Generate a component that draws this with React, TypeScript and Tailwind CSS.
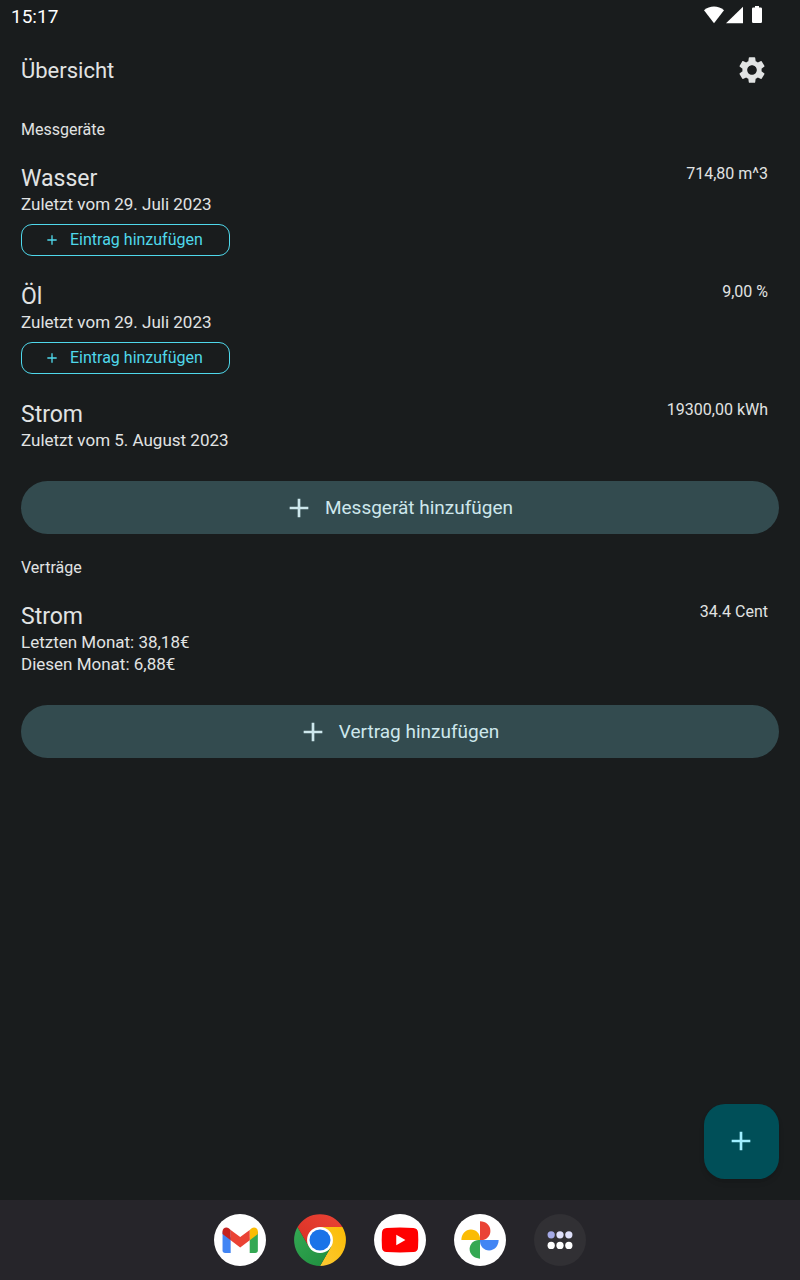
import type { ReactNode } from 'react';
import { MdAdd, MdSettings } from 'react-icons/md';

type Entry = {
  name: string;
  value: string;
  details: string[];
  canAddEntry?: boolean;
};

const meters: Entry[] = [
  { name: 'Wasser', value: '714,80 m^3', details: ['Zuletzt vom 29. Juli 2023'], canAddEntry: true },
  { name: 'Öl', value: '9,00 %', details: ['Zuletzt vom 29. Juli 2023'], canAddEntry: true },
  { name: 'Strom', value: '19300,00 kWh', details: ['Zuletzt vom 5. August 2023'] },
];

const contracts: Entry[] = [
  { name: 'Strom', value: '34.4 Cent', details: ['Letzten Monat: 38,18€', 'Diesen Monat: 6,88€'] },
];

function StatusBar() {
  return (
    <div className="flex h-8 items-center justify-between pl-[11px] pr-9 text-white">
      <span className="pt-0.5 text-[19px] leading-8">15:17</span>
      <svg className="mb-0.5 h-5 w-[62px]" viewBox="0 0 62 20" fill="currentColor" aria-hidden="true">
        <path d="M2 5.2C4.900 2.800 8.300 1.500 12 1.500s7.100 1.300 10 3.700L12 18.200z" />
        <path d="M41 1.700v16.500H24z" />
        <path d="M53 1h4v1.500h1.700q1.300 0 1.300 1.300v12.900q0 1.300-1.300 1.300h-7.400q-1.300 0-1.300-1.300V3.800q0-1.300 1.300-1.300H53z" />
      </svg>
    </div>
  );
}

function EntryItem({ entry }: { entry: Entry }) {
  return (
    <li className="flex items-start justify-between pr-[11px]">
      <div>
        <h3 className="text-[23px] leading-[29px]">{entry.name}</h3>
        {entry.details.map((line) => (
          <p key={line} className="text-[17px] leading-[22px]">{line}</p>
        ))}
        {entry.canAddEntry && (
          <button
            type="button"
            className="mt-[9px] flex h-8 items-center gap-2.5 rounded-[11px] border border-[#4fd8eb] pl-[22px] pr-[26px] text-base text-[#4fd8eb]"
          >
            <MdAdd className="size-4" aria-hidden="true" />
            Eintrag hinzufügen
          </button>
        )}
      </div>
      <span className="text-base leading-5">{entry.value}</span>
    </li>
  );
}

function Section({ title, entries, action }: { title: string; entries: Entry[]; action: string }) {
  return (
    <section>
      <h2 className="text-base leading-5">{title}</h2>
      <ul className="mt-6 flex flex-col gap-[26px]">
        {entries.map((entry) => (
          <EntryItem key={entry.name} entry={entry} />
        ))}
      </ul>
      <button
        type="button"
        className="mt-[30px] flex h-[53px] w-full items-center justify-center gap-2.5 rounded-full bg-[#334b4f] pr-1 text-[19px] text-[#cde7ec]"
      >
        <MdAdd className="size-8" aria-hidden="true" />
        <span className="pt-0.5">{action}</span>
      </button>
    </section>
  );
}

function DockApp({ label, children }: { label: string; children: ReactNode }) {
  return (
    <button type="button" aria-label={label} className="size-13">
      <svg viewBox="0 0 53 53" className="size-full" aria-hidden="true">
        {children}
      </svg>
    </button>
  );
}

function Dock() {
  return (
    <nav aria-label="Apps" className="flex h-20 items-center justify-center gap-7 bg-[#26252a]">
      <DockApp label="Gmail">
        <circle cx="26.500" cy="26.500" r="26.500" fill="#fff" />
        <path d="M8.700 18l8.300 6v15.700h-5.600q-2.700 0-2.700-2.700z" fill="#4285f4" />
        <path d="M44.700 18l-8.300 6v15.700H42q2.700 0 2.700-2.700z" fill="#34a853" />
        <path d="M36.400 16.200l2-1.700c2.600-2 6.300-.2 6.300 3.100v2.900l-8.300 6.300z" fill="#fbbc04" />
        <path d="M17 16.200l9.700 7.300 9.700-7.300v10.600l-9.700 7.300L17 26.800z" fill="#ea4335" />
        <path d="M17 16.200l-2-1.700c-2.600-2-6.300-.2-6.300 3.100v2.900l8.300 6.300z" fill="#c5221f" />
      </DockApp>
      <DockApp label="Chrome">
        <defs>
          <linearGradient id="chrome-red" x1="0" y1="1" x2="1" y2="0">
            <stop offset="0" stopColor="#d93025" />
            <stop offset="1" stopColor="#ea4335" />
          </linearGradient>
          <linearGradient id="chrome-yellow" x1="0" y1="1" x2="1" y2="0">
            <stop offset="0" stopColor="#fcc934" />
            <stop offset="1" stopColor="#fbbc04" />
          </linearGradient>
          <linearGradient id="chrome-green" x1="1" y1="1" x2="0" y2="0">
            <stop offset="0" stopColor="#1e8e3e" />
            <stop offset="1" stopColor="#34a853" />
          </linearGradient>
        </defs>
        <path d="M26.500 13.300h22.900A26.500 26.500 0 0 1 26.500 53L37.900 33.100z" fill="url(#chrome-yellow)" />
        <path d="M15.100 33.100L3.600 13.300A26.500 26.500 0 0 0 26.500 53l11.400-19.900L26.500 26.500z" fill="url(#chrome-green)" />
        <path d="M3.600 13.300a26.500 26.500 0 0 1 45.800 0H26.500v13.200l-11.400 6.600z" fill="url(#chrome-red)" />
        <circle cx="26.500" cy="26.500" r="13.200" fill="#fff" />
        <circle cx="26.500" cy="26.500" r="10.700" fill="#1a73e8" />
      </DockApp>
      <DockApp label="YouTube">
        <circle cx="26.500" cy="26.500" r="26.500" fill="#fff" />
        <path d="M12.800 14.200q13.700-1 27.400 0 4.400.3 4.700 4.700.5 7.600 0 15.200-.3 4.400-4.700 4.700-13.700 1-27.400 0-4.400-.3-4.700-4.700-.5-7.600 0-15.200.3-4.400 4.700-4.700z" fill="#f00" />
        <path d="M22.700 21.200v10.600l9.300-5.300z" fill="#fff" />
      </DockApp>
      <DockApp label="Fotos">
        <circle cx="26.500" cy="26.500" r="26.500" fill="#fff" />
        <path d="M26.500 7.500c6 0 10.600 4.300 10.600 9.700s-4.300 9.300-9.300 9.300h-1.300z" fill="#ea4335" />
        <path d="M45.500 26.500c0 6-4.300 10.600-9.700 10.600s-9.300-4.300-9.300-9.300v-1.300z" fill="#4285f4" />
        <path d="M26.500 45.500c-6 0-10.600-4.300-10.600-9.700s4.300-9.300 9.300-9.300h1.300z" fill="#34a853" />
        <path d="M7.500 26.500c0-6 4.300-10.600 9.700-10.600s9.300 4.300 9.300 9.300v1.300z" fill="#fbbc04" />
      </DockApp>
      <DockApp label="Alle Apps">
        <circle cx="26.500" cy="26.500" r="26.500" fill="#313034" />
        <circle cx="17.500" cy="21.200" r="3.700" fill="#a4a9e6" />
        <circle cx="26.500" cy="21.200" r="3.700" fill="#dfe0fa" />
        <circle cx="35.500" cy="21.200" r="3.700" fill="#dfe0fa" />
        <circle cx="17.500" cy="32" r="3.700" fill="#fff" />
        <circle cx="26.500" cy="32" r="3.700" fill="#fff" />
        <circle cx="35.500" cy="32" r="3.700" fill="#fff" />
      </DockApp>
    </nav>
  );
}

export default function App() {
  return (
    <div className="flex min-h-screen flex-col bg-[#191c1d] font-['Roboto',sans-serif] text-[#e1e3e3]">
      <StatusBar />
      <header className="flex h-[76px] items-center justify-between pl-[21px] pr-8">
        <h1 className="pt-0.5 text-[22px] leading-8">Übersicht</h1>
        <button type="button" aria-label="Einstellungen">
          <MdSettings className="size-8" aria-hidden="true" />
        </button>
      </header>
      <main className="flex flex-1 flex-col gap-6 px-[21px] pt-3">
        <Section title="Messgeräte" entries={meters} action="Messgerät hinzufügen" />
        <Section title="Verträge" entries={contracts} action="Vertrag hinzufügen" />
      </main>
      <div className="flex justify-end px-[21px] pb-[21px]">
        <button
          type="button"
          aria-label="Hinzufügen"
          className="flex size-[75px] items-center justify-center rounded-[21px] bg-[#004f58] pb-0.5 pr-0.5 text-[#a0efff] shadow-md"
        >
          <MdAdd className="size-8" aria-hidden="true" />
        </button>
      </div>
      <Dock />
    </div>
  );
}
